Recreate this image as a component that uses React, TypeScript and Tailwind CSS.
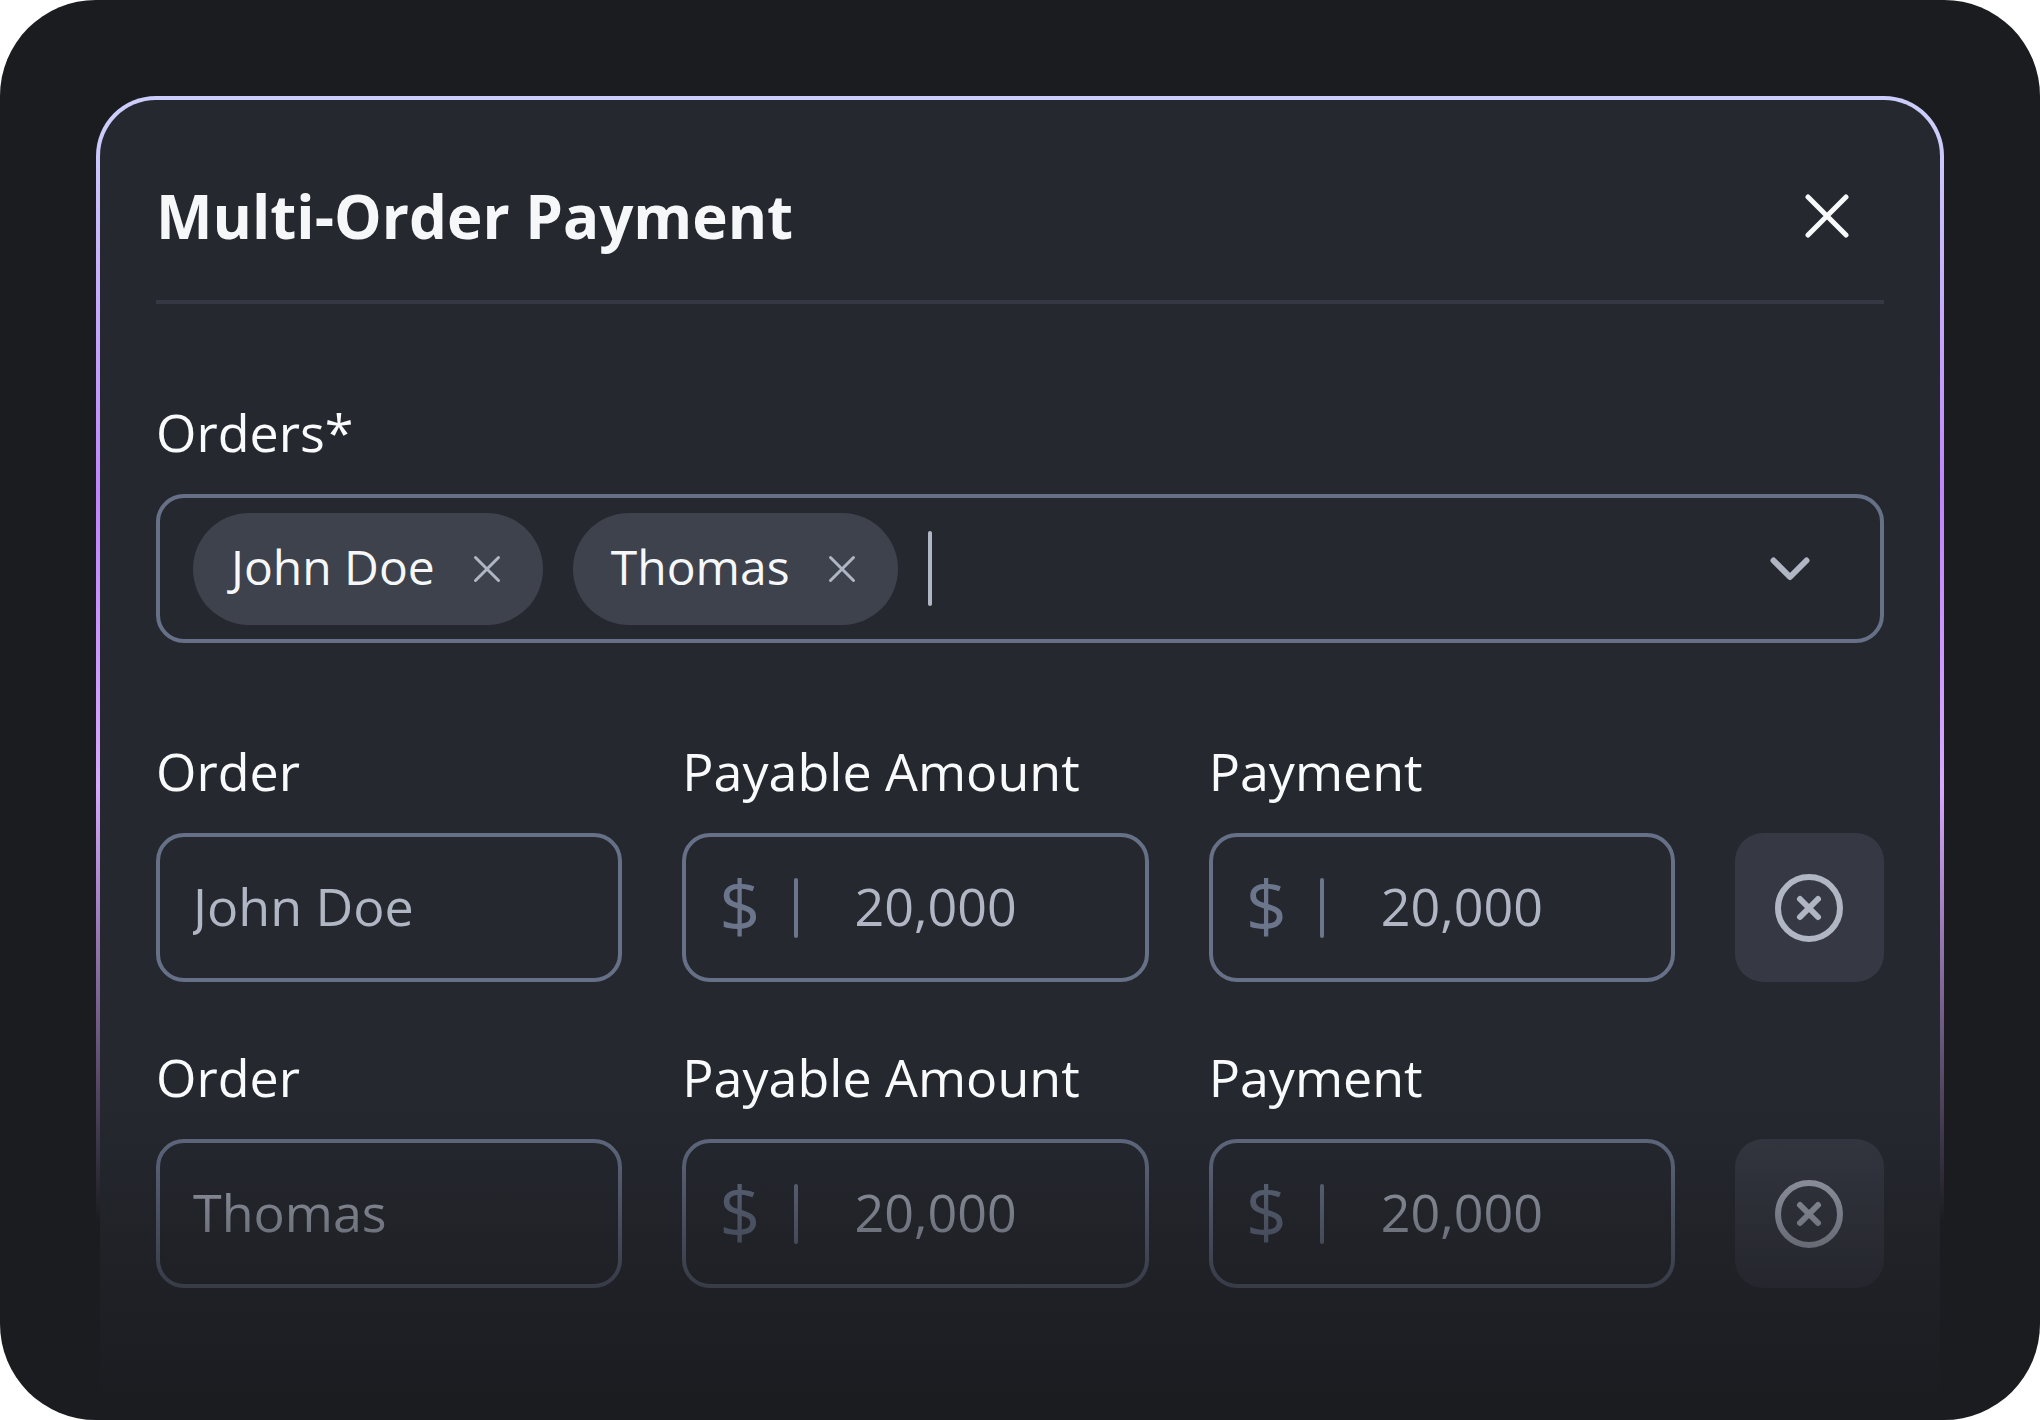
import React, { useId, useState } from 'react';

interface OrderLine {
  id: number;
  name: string;
  payable: string;
  payment: string;
}

const initialOrders: OrderLine[] = [
  { id: 1, name: 'John Doe', payable: '20,000', payment: '20,000' },
  { id: 2, name: 'Thomas', payable: '20,000', payment: '20,000' },
];

const labelClass = 'block text-[52px] leading-[64px] text-[#f9fafb] whitespace-nowrap';
const boxClass = 'h-[149px] w-full rounded-[28px] border-4 border-[#667087]';

const CloseIcon: React.FC = () => (
  <svg width="44" height="44" viewBox="0 0 44 44" fill="none" stroke="currentColor" strokeWidth="5" strokeLinecap="round">
    <path d="M3 3 41 41M41 3 3 41" />
  </svg>
);

const ChipCloseIcon: React.FC = () => (
  <svg width="28" height="28" viewBox="0 0 28 28" fill="none" stroke="currentColor" strokeWidth="3" strokeLinecap="round">
    <path d="M2.5 2.5 25.5 25.5M25.5 2.5 2.5 25.5" />
  </svg>
);

const ChevronIcon: React.FC = () => (
  <svg width="40" height="24" viewBox="0 0 40 24" fill="none" stroke="currentColor" strokeWidth="6" strokeLinecap="round" strokeLinejoin="round">
    <path d="M3.5 3.5 20 20 36.5 3.5" />
  </svg>
);

const RemoveIcon: React.FC = () => (
  <svg width="68" height="68" viewBox="0 0 68 68" fill="none" stroke="currentColor" strokeWidth="6" strokeLinecap="round">
    <circle cx="34" cy="34" r="31" />
    <path d="M25 25 43 43M43 25 25 43" />
  </svg>
);

interface FieldProps {
  label: string;
  value: string;
  onChange: (value: string) => void;
}

const TextField: React.FC<FieldProps> = ({ label, value, onChange }) => {
  const id = useId();
  return (
    <div className="flex min-w-0 flex-1 flex-col gap-[30px]">
      <label htmlFor={id} className={labelClass}>{label}</label>
      <input
        id={id}
        type="text"
        value={value}
        onChange={(e) => onChange(e.target.value)}
        className={`${boxClass} bg-transparent px-[33px] pb-1 text-[52px] text-[#b1b6c5] outline-none`}
      />
    </div>
  );
};

const MoneyField: React.FC<FieldProps> = ({ label, value, onChange }) => {
  const id = useId();
  return (
    <div className="flex min-w-0 flex-1 flex-col gap-[30px]">
      <label htmlFor={id} className={labelClass}>{label}</label>
      <div className={`${boxClass} flex items-center pl-[33px]`}>
        <span className="pb-2 text-[72px] leading-[80px] text-[#6b758c]">$</span>
        <span className="ml-[33px] h-[60px] w-1 shrink-0 rounded-full bg-[#6b758c]" />
        <input
          id={id}
          type="text"
          inputMode="numeric"
          value={value}
          onChange={(e) => onChange(e.target.value)}
          className="ml-[57px] min-w-0 flex-1 bg-transparent pb-1 text-[52px] text-[#b1b6c5] outline-none"
        />
      </div>
    </div>
  );
};

export default function App() {
  const [orders, setOrders] = useState<OrderLine[]>(initialOrders);
  const [search, setSearch] = useState('');

  const updateOrder = (id: number, changes: Partial<OrderLine>) => {
    setOrders((prev) => prev.map((o) => (o.id === id ? { ...o, ...changes } : o)));
  };

  const removeOrder = (id: number) => {
    setOrders((prev) => prev.filter((o) => o.id !== id));
  };

  return (
    <div className="flex min-h-screen flex-col rounded-[96px] bg-[#1b1c20] px-24 pt-24 pb-5 font-['Open_Sans',sans-serif]">
      <main className="relative flex flex-1 flex-col rounded-t-[60px] bg-[linear-gradient(to_bottom,#cccdfb_0px,#cccdfb_30px,#c084fc_400px,#d8a8ff_690px,#1b1c20_1125px)] px-1 pt-1">
        <div className="flex-1 rounded-t-[56px] bg-[#25282f] px-14">
          <header className="flex items-center justify-between border-b-4 border-[#353743] pt-[76px] pb-[44px]">
            <h1 className="text-[60px] leading-[80px] font-bold text-[#f6f7f9]">Multi-Order Payment</h1>
            <button type="button" aria-label="Close" className="mr-[17px] flex size-20 items-center justify-center text-[#f9fafb]">
              <CloseIcon />
            </button>
          </header>

          <form className="flex flex-col gap-[63px] pt-24" onSubmit={(e) => e.preventDefault()}>
            <div className="mb-[33px] flex flex-col gap-[30px]">
              <label htmlFor="orders" className={labelClass}>Orders*</label>
              <div className={`${boxClass} flex items-center gap-[30px] pr-[50px] pl-[33px]`}>
                {orders.map((order) => (
                  <span key={order.id} className="flex h-28 shrink-0 items-center gap-[38px] rounded-full bg-[#3d424d] pr-[42px] pl-[38px] text-[48px] font-medium whitespace-nowrap text-[#f6f7f9]">
                    <span className="pb-1">{order.name}</span>
                    <button type="button" aria-label={`Remove ${order.name}`} onClick={() => removeOrder(order.id)} className="text-[#b1b6c5]">
                      <ChipCloseIcon />
                    </button>
                  </span>
                ))}
                <span className="h-[75px] w-1 shrink-0 rounded-full bg-[#b1b6c5]" />
                <input
                  id="orders"
                  type="text"
                  value={search}
                  onChange={(e) => setSearch(e.target.value)}
                  className="min-w-0 flex-1 bg-transparent text-[48px] text-[#f6f7f9] outline-none"
                />
                <button type="button" aria-label="Show orders" className="flex size-20 shrink-0 items-center justify-center text-[#b1b6c5]">
                  <ChevronIcon />
                </button>
              </div>
            </div>

            {orders.map((order) => (
              <div key={order.id} className="flex items-end gap-[60px]">
                <TextField label="Order" value={order.name} onChange={(name) => updateOrder(order.id, { name })} />
                <MoneyField label="Payable Amount" value={order.payable} onChange={(payable) => updateOrder(order.id, { payable })} />
                <MoneyField label="Payment" value={order.payment} onChange={(payment) => updateOrder(order.id, { payment })} />
                <button
                  type="button"
                  aria-label={`Remove ${order.name} payment`}
                  onClick={() => removeOrder(order.id)}
                  className="flex size-[149px] shrink-0 items-center justify-center rounded-[28px] bg-[#363843] text-[#b1b6c5]"
                >
                  <RemoveIcon />
                </button>
              </div>
            ))}
          </form>
        </div>
        {/* fades the lower rows into the page background */}
        <div className="pointer-events-none absolute inset-x-1 bottom-0 h-[300px] bg-linear-to-b from-[#1b1c20]/0 to-[#1b1c20]" />
      </main>
    </div>
  );
}
